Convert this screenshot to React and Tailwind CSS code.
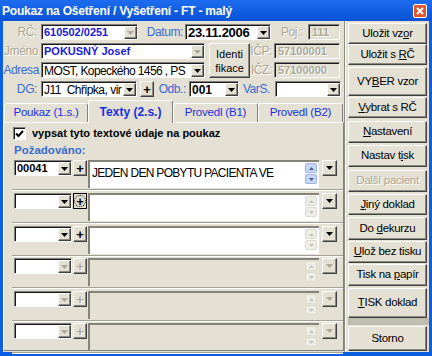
import React from 'react';

const GRAY = "text-[#aca899] [text-shadow:1px_1px_0_#ffffff]";
const BLUE = "text-[#3a6bd0]";
const SUNK = "border border-t-[#808080] border-l-[#808080] border-b-white border-r-white shadow-[inset_1px_1px_0_#1a1a1a]";
const RAISE = "border border-t-white border-l-white border-b-[#404040] border-r-[#404040] shadow-[inset_-1px_-1px_0_#8c8a80]";

const Arrow = ({ dim }) => (
    <svg width="7" height="4" viewBox="0 0 7 4">
        <path d="M0 0H7L3.5 4Z" fill={dim ? "#aca899" : "#000"} />
    </svg>
);

const Drop = ({ dim, cls = "w-[13px]" }) => (
    <div className={`flex shrink-0 items-center justify-center bg-[#e4e1d4] ${RAISE} ${cls}`}>
        <Arrow dim={dim} />
    </div>
);

const Combo = ({ w, children, white = true, dim, cls = "" }) => (
    <div className={`flex h-[16px] shrink-0 pt-[1px] ${SUNK} ${w} ${white ? "bg-white" : ""} ${cls}`}>
        <div className="flex min-w-0 flex-1 items-center overflow-hidden whitespace-nowrap pl-[2px]">{children}</div>
        <Drop dim={dim} />
    </div>
);

const Box = ({ w, children, cls = "" }) => (
    <div className={`flex h-[16px] shrink-0 items-center pl-[3px] pt-[1px] text-[11px] font-bold ${GRAY} ${SUNK} ${w} ${cls}`}>
        {children}
    </div>
);

const Label = ({ w, gray, children, cls = "" }) => (
    <span className={`shrink-0 text-right text-[12px] leading-[16px] tracking-[-0.4px] ${gray ? GRAY : BLUE} ${w} ${cls}`}>
        {children}
    </span>
);

const Plus = ({ dim, focus, cls = "" }) => (
    <div className={`flex h-[16px] w-[14px] shrink-0 items-center justify-center bg-[#e4e1d4] ${focus ? "border border-black" : RAISE} ${cls}`}>
        <span className={`flex h-[10px] w-[10px] items-center justify-center text-[13px] font-bold leading-none ${dim ? GRAY : "text-black"} ${focus ? "rounded-full outline outline-1 outline-dotted outline-black" : ""}`}>+</span>
    </div>
);

const Spin = ({ on }) => {
    const c = on ? "bg-[#c6d5fb] border-[#9fb3e6]" : "bg-[#eeede6] border-[#dcdacf]";
    const a = on ? "#4d6185" : "#c4c2b7";
    return (
        <div className="mr-[2px] mt-[1px] flex w-[12px] shrink-0 flex-col gap-[1px]">
            <div className={`flex h-[10px] items-center justify-center rounded-[2px] border ${c}`}>
                <svg width="5" height="3"><path d="M0 3L2.5 0L5 3Z" fill={a} /></svg>
            </div>
            <div className={`flex h-[10px] items-center justify-center rounded-[2px] border ${c}`}>
                <svg width="5" height="3"><path d="M0 0L2.5 3L5 0Z" fill={a} /></svg>
            </div>
        </div>
    );
};

const TextRow = ({ h, on, code, text, focus, spinOn }) => (
    <div className={`flex shrink-0 flex-col ${h}`}>
        <div className="flex h-[28px] items-start pl-[10px]">
            <Combo w="w-[58px]" white={on} dim={!on}>
                {code && <span className="text-[11px] font-bold text-black">{code}</span>}
            </Combo>
            <Plus dim={!on} focus={focus} cls="ml-[1px]" />
            <div className={`ml-[1px] flex h-[28px] w-[231px] shrink-0 border-t-2 border-l-2 border-t-[#858378] border-l-[#858378] ${on ? "bg-white" : ""}`}>
                <div className="flex-1 whitespace-nowrap pl-[2px] pt-[2px] text-[12px] tracking-[-0.7px] text-black">{text}</div>
                <Spin on={spinOn} />
            </div>
            <Drop dim={!on} cls="ml-[3px] h-[16px] w-[15px]" />
        </div>
        <div className="ml-[8px] mt-[1px] h-[2px] shrink-0 border-t border-b border-t-[#a3a094] border-b-white" />
    </div>
);

const buttons = [
    { label: <>Uložit vz<u>o</u>r</>, cls: "mt-[2px] h-[21px]" },
    { label: <>Uložit s <u>R</u>Č</>, cls: "h-[21px]" },
    { label: <>VY<u>B</u>ER vzor</>, cls: "mt-[2px] h-[29px]" },
    { label: <><u>V</u>ybrat s RČ</>, cls: "mt-[1px] h-[21px]" },
    { label: <><u>N</u>astavení</>, cls: "mt-[3px] h-[22px]" },
    { label: <>Nastav t<u>i</u>sk</>, cls: "mt-[2px] h-[22px]" },
    { label: "Další pacient", cls: "mt-[3px] h-[22px]", dis: true },
    { label: <><u>J</u>iný doklad</>, cls: "mt-[2px] h-[21px]" },
    { label: <>Do <u>d</u>ekurzu</>, cls: "mt-[2px] h-[23px]" },
    { label: <><u>U</u>lož bez tisku</>, cls: "mt-[1px] h-[22px]" },
    { label: <>Tisk na <u>p</u>apír</>, cls: "mt-[1px] h-[22px]" },
    { label: <><u>T</u>ISK doklad</>, cls: "mt-[2px] h-[30px]" },
];

const Btn = ({ children, cls, dis }) => (
    <div className={`flex w-[79px] shrink-0 items-center justify-center bg-[#e4e1d4] text-[11.5px] tracking-[-0.3px] ${RAISE} ${cls} ${dis ? GRAY : "text-black"}`}>
        <span>{children}</span>
    </div>
);

const tabs = ["Poukaz (1.s.)", "Texty (2.s.)", "Provedl (B1)", "Provedl (B2)"];

const App = () => {
    return (
        <div className="h-[356px] w-[432px] overflow-hidden bg-[#0b5fe0] font-['Liberation_Sans',Arial,sans-serif] select-none">
            {/* title bar */}
            <div className="flex h-[21px] items-center justify-between bg-gradient-to-b from-[#1d6cf0] to-[#0852d6] pl-[2px] pr-[5px]">
                <span className="text-[12px] font-bold tracking-[-0.2px] text-white">Poukaz na Ošetření / Vyšetření - FT - malý</span>
                <div className="flex h-[14px] w-[14px] items-center justify-center rounded-[2px] border border-white bg-[#e0572e]">
                    <svg width="8" height="8" viewBox="0 0 8 8"><path d="M1 1L7 7M7 1L1 7" stroke="#fff" strokeWidth="2" /></svg>
                </div>
            </div>

            <div className="mx-[3px] flex h-[331px] bg-[#e4e1d4]">
                {/* left part */}
                <div className="flex w-[341px] shrink-0 flex-col">
                    <div className="flex flex-col gap-[3px] pt-[3px]">
                        <div className="flex h-[16px]">
                            <Label w="w-[37px]" cls="pr-[3px]" gray>RČ:</Label>
                            <Combo w="w-[97px]" cls="ml-[1px]" dim>
                                <span className="text-[11px] font-bold text-[#1a1ad6]">610502/0251</span>
                            </Combo>
                            <Label w="w-[47px]" cls="pr-[2px]">Datum:</Label>
                            <Combo w="w-[86px]">
                                <span className="text-[13px] font-bold tracking-[-0.3px] text-black">23.11.2006</span>
                            </Combo>
                            <Label w="w-[36px]" cls="pr-[4px]" gray>Poj.:</Label>
                            <Box w="w-[32px]" cls="ml-[1px]">111</Box>
                        </div>

                        <div className="flex">
                            <div className="flex flex-col gap-[3px]">
                                <div className="flex h-[16px]">
                                    <Label w="w-[37px]" cls="pr-[2px]" gray>Jméno</Label>
                                    <Combo w="w-[164px]" cls="ml-[1px]" dim>
                                        <span className="text-[11px] font-bold text-[#1a1ad6]">POKUSNÝ Josef</span>
                                    </Combo>
                                </div>
                                <div className="flex h-[16px]">
                                    <Label w="w-[37px]" cls="pr-[1px]">Adresa</Label>
                                    <Combo w="w-[164px]" cls="ml-[1px]">
                                        <span className="text-[12px] tracking-[-0.6px] text-black">MOST, Kopeckého 1456 , PS</span>
                                    </Combo>
                                </div>
                            </div>
                            <div className={`ml-[4px] flex h-[35px] w-[41px] shrink-0 flex-col items-center justify-center text-[11px] leading-[14px] text-black ${RAISE}`}>
                                <span>Identi</span>
                                <span>fikace</span>
                            </div>
                            <div className="flex flex-col gap-[3px]">
                                <div className="flex h-[16px]">
                                    <Label w="w-[23px]" cls="pr-[1px]" gray>IČP:</Label>
                                    <Box w="w-[66px]" cls="ml-[1px]">57100001</Box>
                                </div>
                                <div className="flex h-[16px]">
                                    <Label w="w-[23px]" cls="pr-[1px]" gray>IČZ:</Label>
                                    <Box w="w-[66px]" cls="ml-[1px]">57100000</Box>
                                </div>
                            </div>
                        </div>

                        <div className="flex h-[16px]">
                            <Label w="w-[37px]" cls="pr-[3px]">DG:</Label>
                            <Combo w="w-[96px]" cls="ml-[1px]">
                                <span className="text-[12px] tracking-[-0.5px] text-black">J11&nbsp; Chřipka, vir</span>
                            </Combo>
                            <Plus cls="ml-[3px] w-[13px]" />
                            <Label w="w-[34px]" cls="pr-[2px]">Odb.:</Label>
                            <Combo w="w-[50px]" cls="ml-[1px]">
                                <span className="text-[12px] font-bold text-black">001</span>
                            </Combo>
                            <Label w="w-[35px]" cls="pr-[4px]">VarS.</Label>
                            <Combo w="w-[66px]" cls="ml-[1px]" />
                        </div>
                    </div>

                    {/* tab control */}
                    <div className="mt-[3px] flex h-[250px] flex-col">
                        <div className="relative z-10 flex h-[22px] items-end pl-[1px]">
                            {tabs.map((t, i) =>
                                i === 1 ? (
                                    <div key={t} className="mb-[-1px] flex h-[23px] w-[85px] items-center justify-center rounded-t-[3px] border-t border-l border-r border-t-white border-l-white border-r-[#808080] bg-[#e4e1d4] text-[12px] font-bold text-[#1a2fe0]">
                                        {t}
                                    </div>
                                ) : (
                                    <div key={t} className={`flex h-[19px] items-center justify-center rounded-t-[3px] border-t border-l border-r border-t-white border-l-white border-r-[#808080] text-[11.5px] tracking-[-0.2px] text-[#1a2fe0] ${i === 0 ? "w-[84px]" : "w-[85px]"}`}>
                                        {t}
                                    </div>
                                )
                            )}
                        </div>
                        <div className="flex flex-1 flex-col border border-t-white border-l-white border-b-[#808080] border-r-[#808080] pt-[4px]">
                            <div className="flex h-[13px] items-center pl-[9px]">
                                <div className={`flex h-[13px] w-[13px] items-center justify-center bg-white ${SUNK}`}>
                                    <svg width="9" height="8" viewBox="0 0 9 8"><path d="M1 3.5L3.5 6L8 1" fill="none" stroke="#000" strokeWidth="2" /></svg>
                                </div>
                                <span className="ml-[6px] text-[11px] font-bold text-black">vypsat tyto textové údaje na poukaz</span>
                            </div>
                            <div className="mt-[3px] h-[14px] pl-[10px] text-[11.5px] font-bold leading-[14px] text-[#3a6bd0]">Požadováno:</div>
                            <div className="mt-[3px] flex flex-1 flex-col">
                                <TextRow h="h-[33px]" on code="00041" text="JEDEN DEN POBYTU PACIENTA VE" spinOn />
                                <TextRow h="h-[33px]" on focus />
                                <TextRow h="h-[32px]" on />
                                <TextRow h="h-[33px]" />
                                <TextRow h="h-[32px]" />
                                <TextRow h="h-[27px]" />
                            </div>
                        </div>
                    </div>
                </div>

                {/* right buttons */}
                <div className="flex w-[85px] shrink-0 border-l border-l-[#8c8a80]">
                    <div className="flex flex-1 flex-col border-l border-l-white pl-[2px]">
                        {buttons.map((b, i) => (
                            <Btn key={i} cls={b.cls} dis={b.dis}>{b.label}</Btn>
                        ))}
                        <div className="h-[7px] w-[81px] shrink-0 bg-[#c0bdb1]" />
                        <Btn cls="mt-[1px] h-[25px]">Storno</Btn>
                    </div>
                </div>
            </div>
        </div>
    );
};

export default App;
